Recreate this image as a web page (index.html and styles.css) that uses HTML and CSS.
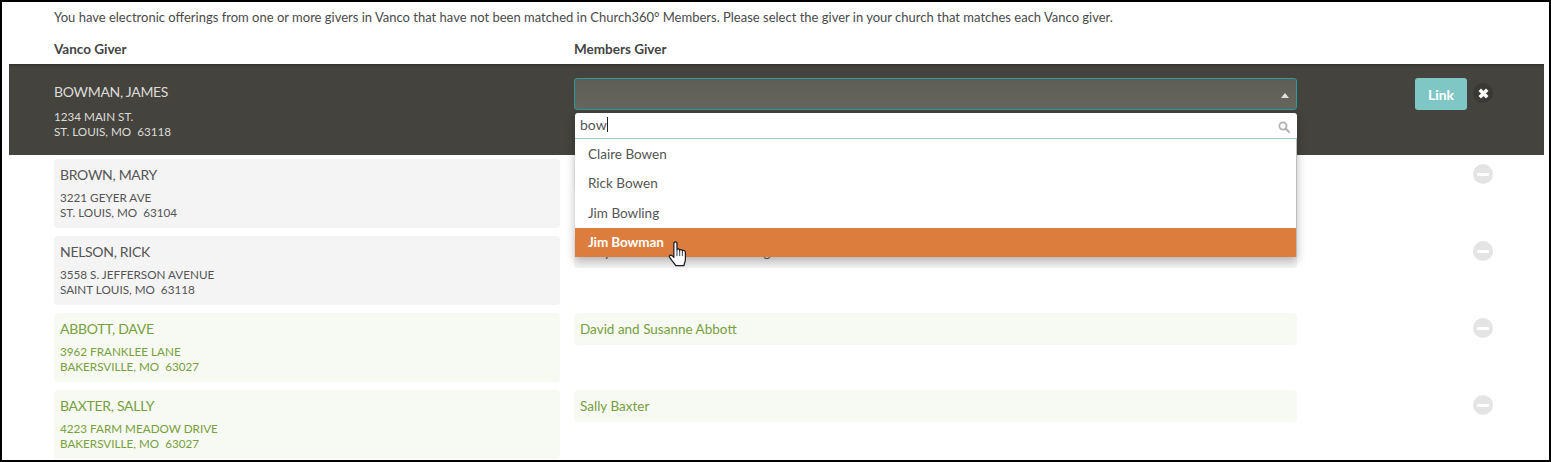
FILE: index.html
```html
<!DOCTYPE html>
<html lang="en">
<head>
<meta charset="utf-8">
<title>Vanco Givers</title>
<link rel="stylesheet" href="styles.css">
</head>
<body>
<main class="frame">
  <p class="intro">You have electronic offerings from one or more givers in Vanco that have not been matched in Church360° Members. Please select the giver in your church that matches each Vanco giver.</p>
  <div class="heads">
    <div>Vanco Giver</div>
    <div>Members Giver</div>
  </div>
  <section class="active">
    <div class="giver">
      <div class="name">BOWMAN, JAMES</div>
      <div class="addr">1234 MAIN ST.<br>ST. LOUIS, MO &nbsp;63118</div>
    </div>
    <div class="picker">
      <div class="select"><span class="caret"></span></div>
      <div class="drop">
        <div class="search">
          <span class="typed">bow</span><span class="text-cursor"></span>
          <svg class="search-icon" viewBox="0 0 12 12" width="12" height="12" aria-hidden="true"><circle cx="5" cy="5" r="3.6" fill="none" stroke="#b0b0b0" stroke-width="1.7"/><path d="M7.8 7.8 11 11" stroke="#b0b0b0" stroke-width="2" stroke-linecap="round"/></svg>
        </div>
        <ul class="options">
          <li>Claire Bowen</li>
          <li>Rick Bowen</li>
          <li>Jim Bowling</li>
          <li class="on">Jim Bowman</li>
        </ul>
        <svg class="hand" viewBox="0 0 18 25" width="19" height="26" aria-hidden="true"><path d="M5.5 2.2C5.5.4 8.5.4 8.5 2.2V8.6C8.7 7.3 11 7.3 11.1 9 11.3 7.9 13.6 8 13.7 9.6 14 8.7 16.6 8.9 16.6 10.8V17.5C16.6 20 15.6 21 15.2 23.6H7.2C6.3 21.4 3.4 18.8 1.6 16 .4 14 2.6 12.8 4.1 14.3L5.5 15.8Z" fill="#fff" stroke="#1c1c24" stroke-width="1.2" stroke-linejoin="round"/><path d="M8.5 9V14.5M11.1 9V14.5M13.7 9.6V14.5" stroke="#1c1c24" stroke-width=".8" fill="none"/></svg>
      </div>
    </div>
    <div class="actions">
      <button class="link" type="button">Link</button>
      <span class="close"><svg viewBox="0 0 10 10" width="11" height="11" aria-hidden="true"><path d="M1.6 1.6 8.4 8.4M8.4 1.6 1.6 8.4" stroke="#fff" stroke-width="3.2"/></svg></span>
    </div>
  </section>
  <section class="row plain">
    <div class="giver">
      <div class="name">BROWN, MARY</div>
      <div class="addr">3221 GEYER AVE<br>ST. LOUIS, MO &nbsp;63104</div>
    </div>
    <div class="match"></div>
    <div class="actions"><span class="minus"></span></div>
  </section>
  <section class="row plain">
    <div class="giver">
      <div class="name">NELSON, RICK</div>
      <div class="addr">3558 S. JEFFERSON AVENUE<br>SAINT LOUIS, MO &nbsp;63118</div>
    </div>
    <div class="match">Mary Nelson and Derek Harding</div>
    <div class="actions"><span class="minus"></span></div>
  </section>
  <section class="row done">
    <div class="giver">
      <div class="name">ABBOTT, DAVE</div>
      <div class="addr">3962 FRANKLEE LANE<br>BAKERSVILLE, MO &nbsp;63027</div>
    </div>
    <div class="match">David and Susanne Abbott</div>
    <div class="actions"><span class="minus"></span></div>
  </section>
  <section class="row done">
    <div class="giver">
      <div class="name">BAXTER, SALLY</div>
      <div class="addr">4223 FARM MEADOW DRIVE<br>BAKERSVILLE, MO &nbsp;63027</div>
    </div>
    <div class="match">Sally Baxter</div>
    <div class="actions"><span class="minus"></span></div>
  </section>
</main>
</body>
</html>
```
FILE: styles.css
```css
* { box-sizing: border-box; }
html, body { margin: 0; padding: 0; }
body { font-family: Lato, "Open Sans", sans-serif; color: #4a4a4a; background: #fff; }
.frame {
  width: 1551px;
  height: 462px;
  border: 2px solid #000;
  overflow: hidden;
  background: #fff;
}
.intro {
  margin: 0;
  padding: 7px 0 0 52px;
  font-size: 13px;
  line-height: 16px;
  height: 38px;
}
.heads {
  display: grid;
  grid-template-columns: 506px 723px;
  column-gap: 14px;
  margin-left: 52px;
  height: 24px;
  font-size: 13.5px;
  font-weight: 700;
  line-height: 18px;
  color: #444;
}
.active, .row {
  display: grid;
  grid-template-columns: 506px 723px 1fr;
  column-gap: 14px;
  align-items: start;
}
.active {
  margin: 0 5px 4px 7px;
  padding: 14px 51px 0 45px;
  height: 91px;
  background: #44433e;
  box-shadow: inset 0 3px 3px -2px #2e2e2a;
  color: #dcdcd8;
}
.active .giver { padding-top: 4px; }
.active .addr { margin-top: 7px; }
.picker { position: relative; }
.select {
  position: relative;
  height: 32px;
  border: 1px solid #2a9a9a;
  border-radius: 3px;
  background: linear-gradient(#5d5d56, #66665f);
}
.caret {
  position: absolute;
  right: 7px;
  top: 14px;
  border: 4.5px solid transparent;
  border-top: 0;
  border-bottom: 5px solid #dfdfdb;
}
.drop {
  position: absolute;
  z-index: 5;
  top: 35px;
  left: 1px;
  width: 722px;
  background: #fff;
  border-radius: 3px 3px 0 0;
  box-shadow: 0 4px 10px rgba(0, 0, 0, .28);
}
.search {
  position: relative;
  display: flex;
  align-items: center;
  height: 26px;
  padding: 0 0 2px 5px;
  font-size: 14px;
  color: #555;
  border-bottom: 1px solid #8fd0cf;
}
.text-cursor { width: 1px; height: 15px; background: #222; }
.search-icon { position: absolute; right: 7px; top: 8px; }
.options {
  list-style: none;
  margin: 0;
  padding: 0;
  border-right: 1px solid #bdbdbd;
  font-size: 13.5px;
  color: #555;
}
.options li { height: 29.5px; line-height: 30px; padding-left: 13px; }
.options li:nth-child(2) { line-height: 29px; }
.options .on {
  line-height: 29px;
  background: #dd7d3d;
  color: #fff;
  font-weight: 700;
  letter-spacing: -.1px;
}
.hand { position: absolute; left: 93px; top: 128px; }
.actions {
  display: flex;
  justify-content: flex-end;
  align-items: flex-start;
  gap: 6px;
}
.link {
  width: 52px;
  height: 32px;
  padding: 0;
  border: 0;
  border-radius: 3px;
  background: #7fc7c4;
  color: #fff;
  font: 700 14px Lato, sans-serif;
}
.close {
  display: flex;
  align-items: center;
  justify-content: center;
  width: 20px;
  height: 20px;
  margin-top: 5px;
  border-radius: 50%;
  background: #393936;
}
.row {
  margin: 0 56px 8px 52px;
  height: 69px;
}
.row .giver {
  height: 69px;
  padding: 6px 6px 0;
  border-radius: 4px;
}
.row .match {
  height: 32px;
  padding: 0 6px;
  line-height: 32px;
  font-size: 13.5px;
  border-radius: 4px;
}
.plain .giver, .plain .match { background: #f4f4f4; }
.plain { color: #555; }
.done .giver, .done .match { background: #f6faf2; }
.done { color: #78a040; }
.name { font-size: 14px; line-height: 20px; letter-spacing: -.3px; }
.addr { margin-top: 5px; font-size: 11.7px; line-height: 15px; }
.minus {
  position: relative;
  display: block;
  width: 20px;
  height: 20px;
  margin-top: 5px;
  border-radius: 50%;
  background: #e4e4e4;
}
.minus::after {
  content: "";
  position: absolute;
  left: 4px;
  top: 8.5px;
  width: 12px;
  height: 3px;
  border-radius: 1px;
  background: #fff;
}
```
